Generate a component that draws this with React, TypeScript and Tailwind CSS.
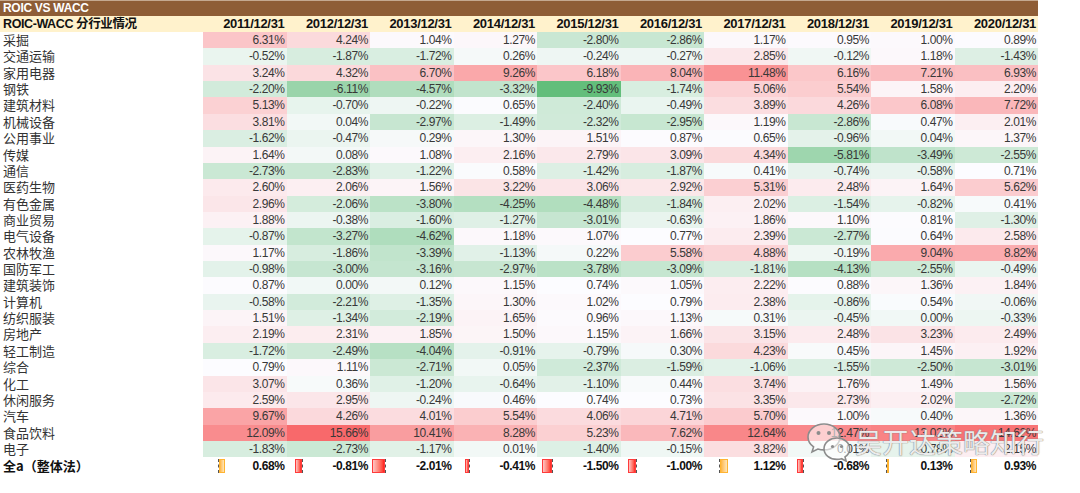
import React from 'react';

const years = [
  '2011/12/31', '2012/12/31', '2013/12/31', '2014/12/31', '2015/12/31',
  '2016/12/31', '2017/12/31', '2018/12/31', '2019/12/31', '2020/12/31',
];

const rows: [string, number[]][] = [
  ['采掘', [6.31, 4.24, 1.04, 1.27, -2.8, -2.86, 1.17, 0.95, 1.0, 0.89]],
  ['交通运输', [-0.52, -1.87, -1.72, 0.26, -0.24, -0.27, 2.85, -0.12, 1.18, -1.43]],
  ['家用电器', [3.24, 4.32, 6.7, 9.26, 6.18, 8.04, 11.48, 6.16, 7.21, 6.93]],
  ['钢铁', [-2.2, -6.11, -4.57, -3.32, -9.93, -1.74, 5.06, 5.54, 1.58, 2.2]],
  ['建筑材料', [5.13, -0.7, -0.22, 0.65, -2.4, -0.49, 3.89, 4.26, 6.08, 7.72]],
  ['机械设备', [3.81, 0.04, -2.97, -1.49, -2.32, -2.95, 1.19, -2.86, 0.47, 2.01]],
  ['公用事业', [-1.62, -0.47, 0.29, 1.3, 1.51, 0.87, 0.65, -0.96, 0.04, 1.37]],
  ['传媒', [1.64, 0.08, 1.08, 2.16, 2.79, 3.09, 4.34, -5.81, -3.49, -2.55]],
  ['通信', [-2.73, -2.83, -1.22, 0.58, -1.42, -1.87, 0.41, -0.74, -0.58, 0.71]],
  ['医药生物', [2.6, 2.06, 1.56, 3.22, 3.06, 2.92, 5.31, 2.48, 1.64, 5.62]],
  ['有色金属', [2.96, -2.06, -3.8, -4.25, -4.48, -1.84, 2.02, -1.54, -0.82, 0.41]],
  ['商业贸易', [1.88, -0.38, -1.6, -1.27, -3.01, -0.63, 1.86, 1.1, 0.81, -1.3]],
  ['电气设备', [-0.87, -3.27, -4.62, 1.18, 1.07, 0.77, 2.39, -2.77, 0.64, 2.58]],
  ['农林牧渔', [1.17, -1.86, -3.39, -1.13, 0.22, 5.58, 4.88, -0.19, 9.04, 8.82]],
  ['国防军工', [-0.98, -3.0, -3.16, -2.97, -3.78, -3.09, -1.81, -4.13, -2.55, -0.49]],
  ['建筑装饰', [0.87, 0.0, 0.12, 1.15, 0.74, 1.05, 2.22, 0.88, 1.36, 1.84]],
  ['计算机', [-0.58, -2.21, -1.35, 1.3, 1.02, 0.79, 2.38, -0.86, 0.54, -0.06]],
  ['纺织服装', [1.51, -1.34, -2.19, 1.65, 0.96, 1.13, 0.31, -0.45, 0.0, -0.33]],
  ['房地产', [2.19, 2.31, 1.85, 1.5, 1.15, 1.66, 3.15, 2.48, 3.23, 2.49]],
  ['轻工制造', [-1.72, -2.49, -4.04, -0.91, -0.79, 0.3, 4.23, 0.45, 1.45, 1.92]],
  ['综合', [0.79, 1.11, -2.71, 0.05, -2.37, -1.59, -1.06, -1.55, -2.5, -3.01]],
  ['化工', [3.07, 0.36, -1.2, -0.64, -1.1, 0.44, 3.74, 1.76, 1.49, 1.56]],
  ['休闲服务', [2.59, 2.95, -0.24, 0.46, 0.74, 0.73, 3.35, 2.73, 2.02, -2.72]],
  ['汽车', [9.67, 4.26, 4.01, 5.54, 4.06, 4.71, 5.7, 1.0, 0.4, 1.36]],
  ['食品饮料', [12.09, 15.66, 10.41, 8.28, 5.23, 7.62, 12.64, 12.47, 13.02, 14.62]],
  ['电子', [-1.83, -2.73, -1.17, 0.01, -1.4, -0.15, 3.82, 0.01, -0.78, 2.15]],
];

const totals = [0.68, -0.81, -2.01, -0.41, -1.5, -1.0, 1.12, -0.68, 0.13, 0.93];

// excel style 3-colour scale: green - white (median) - red
const all = rows.flatMap(r => r[1]);
const sorted = [...all].sort((a, b) => a - b);
const min = sorted[0];
const max = sorted[sorted.length - 1];
const mid = (sorted[sorted.length / 2 - 1] + sorted[sorted.length / 2]) / 2;

const GREEN = [99, 190, 123];
const WHITE = [252, 252, 255];
const RED = [248, 105, 107];

function mix(a: number[], b: number[], t: number) {
  const c = a.map((v, i) => Math.round(v + (b[i] - v) * t));
  return `rgb(${c[0]},${c[1]},${c[2]})`;
}

function heat(v: number) {
  if (v <= mid) return mix(GREEN, WHITE, (v - min) / (mid - min));
  return mix(WHITE, RED, (v - mid) / (max - mid));
}

const fmt = (v: number) => `${v.toFixed(2)}%`;

function TotalCell({ value }: { value: number }) {
  const len = 1.5 + Math.abs(value) * 5.9;
  return (
    <div className="flex items-center h-full">
      <div className="w-[15px] h-[14px] flex justify-end">
        {value < 0 && (
          <div
            className="h-full border border-[#ff3b3b] bg-gradient-to-l from-[#ff1a1a] to-[#ffc4c4]"
            style={{ width: len }}
          />
        )}
      </div>
      <div className="h-[14px] border-l border-dashed border-[#555]" />
      <div className="w-[15px] h-[14px] flex">
        {value > 0 && (
          <div
            className="h-full border border-[#ffb432] bg-gradient-to-r from-[#ffb53a] to-[#ffe6b8]"
            style={{ width: len }}
          />
        )}
      </div>
      <span className="ml-auto pr-[2px] font-bold text-[12px] tracking-[-0.4px] text-[#111]">{fmt(value)}</span>
    </div>
  );
}

function WeChatMark() {
  return (
    <svg width="46" height="40" viewBox="0 0 46 40" fill="none">
      <path
        d="M18 2C9.2 2 2 7.8 2 15c0 4 2.2 7.5 5.6 9.9L6 30l5.8-3c2 .6 4 .9 6.2.9C26.8 27.9 34 22.1 34 15S26.8 2 18 2Z"
        fill="rgba(255,255,255,0.6)"
        stroke="#8c8c8c"
        strokeWidth="1.6"
      />
      <path
        d="M31 16c-7.2 0-13 4.8-13 10.7S23.8 37.4 31 37.4c1.6 0 3.2-.3 4.6-.7l4.6 2.5-1.2-4.3c2.9-2 4.7-4.9 4.7-8.2C43.7 20.8 38 16 31 16Z"
        fill="rgba(255,255,255,0.6)"
        stroke="#8c8c8c"
        strokeWidth="1.6"
      />
      <circle cx="12.5" cy="11" r="2" fill="#8c8c8c" />
      <circle cx="23" cy="11" r="2" fill="#8c8c8c" />
      <circle cx="26.5" cy="24.5" r="1.6" fill="#8c8c8c" />
      <circle cx="35.5" cy="24.5" r="1.6" fill="#8c8c8c" />
    </svg>
  );
}

export default function App() {
  return (
    <div className="relative w-[1080px] h-[493px] bg-white overflow-hidden font-['Liberation_Sans','Noto_Sans_CJK_SC',sans-serif] text-[#383838]">
      <div className="w-[1038px]">
        {/* Title */}
        <div className="h-[1px] bg-[#c4a88f]" />
        <div className="h-[15px] bg-[#8e5d36] text-white font-bold text-[12px] leading-[15px] pl-[3px] tracking-[-0.3px]">
          ROIC VS WACC
        </div>

        {/* Header */}
        <div className="grid grid-cols-[203px_repeat(10,minmax(0,1fr))] h-[16px] bg-[#fff2cc] font-bold text-[#111] leading-[16px]">
          <div className="pl-[3px] text-[12.5px] tracking-[-0.4px]">ROIC-WACC 分行业情况</div>
          {years.map(y => (
            <div key={y} className="text-right pr-[2px] text-[13px] tracking-[-0.3px]">{y}</div>
          ))}
        </div>

        {/* Rows */}
        {rows.map(([name, vals]) => (
          <div key={name} className="grid grid-cols-[203px_repeat(10,minmax(0,1fr))] h-[16.36px] leading-[16.36px]">
            <div className="pl-[3px] text-[13px] text-[#333] font-['Noto_Sans_CJK_SC',sans-serif]">{name}</div>
            {vals.map((v, i) => (
              <div
                key={i}
                className="text-right pr-[2px] text-[12px] tracking-[-0.4px]"
                style={{ backgroundColor: heat(v) }}
              >
                {fmt(v)}
              </div>
            ))}
          </div>
        ))}

        {/* Total */}
        <div className="grid grid-cols-[203px_repeat(10,minmax(0,1fr))] h-[18px] leading-[18px]">
          <div className="pl-[3px] text-[13px] font-bold text-[#111] font-['Noto_Sans_CJK_SC',sans-serif]">全a（整体法）</div>
          {totals.map((v, i) => (
            <TotalCell key={i} value={v} />
          ))}
        </div>
      </div>

      {/* Watermark */}
      <div className="absolute left-[806px] top-[422px] flex items-center gap-[3px] pointer-events-none">
        <WeChatMark />
        <span className="text-[27px] leading-[32px] text-white/85 font-['Noto_Sans_CJK_SC',sans-serif] [text-shadow:0_0_1px_#777,0_0_1px_#777]">
          吴开达策略知行
        </span>
      </div>
    </div>
  );
}
